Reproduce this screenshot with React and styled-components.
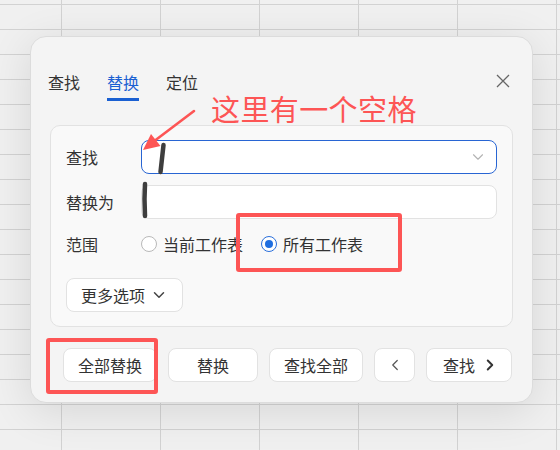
import React from "react";
import styled, { createGlobalStyle } from "styled-components";
import { ChevronDown, ChevronLeft, ChevronRight } from "lucide-react";

const GlobalStyle = createGlobalStyle`
  html, body { margin: 0; padding: 0; }
  html {
    background-color: #f0f0f0;
    background-image:
      linear-gradient(90deg, #d2d2d2 1px, transparent 1px),
      linear-gradient(180deg, #d2d2d2 1px, transparent 1px);
    background-size: 99px 25px;
    background-position: 61px 4px;
  }
  body {
    font-family: "Noto Sans CJK SC", "Noto Sans", sans-serif;
    color: #333;
  }
`;

const Page = styled.div`
  position: relative;
  width: 560px;
  height: 450px;
  box-sizing: border-box;
  padding: 36px 0 0 30px;
  overflow: hidden;
`;

const Dialog = styled.div`
  width: 503px;
  height: 367px;
  box-sizing: border-box;
  display: flex;
  flex-direction: column;
  background: #f4f4f4;
  border: 1px solid #dcdcdc;
  border-radius: 16px;
  box-shadow: 0 8px 44px rgba(0, 0, 0, 0.11);
  padding: 33px 19px 20px 19px;
`;

const Header = styled.div`
  display: flex;
  justify-content: space-between;
  align-items: flex-start;
  margin-left: -2px;
`;

const Tabs = styled.div`
  display: flex;
  gap: 27px;
`;

const Tab = styled.div`
  font-size: 16px;
  line-height: 24px;
  padding-bottom: 4px;
  color: ${(p) => (p.$active ? "#1a60d2" : "#333")};
  border-bottom: 3px solid ${(p) => (p.$active ? "#1a60d2" : "transparent")};
`;

const CloseButton = styled.div`
  width: 14px;
  height: 14px;
  margin: 4px 3px 0 0;
  display: flex;
`;

const Panel = styled.div`
  margin-top: 24px;
  height: 202px;
  box-sizing: border-box;
  background: #f9f9f9;
  border: 1px solid #e2e2e2;
  border-radius: 10px;
  padding: 14px 15px;
  display: flex;
  flex-direction: column;
`;

const FieldRow = styled.div`
  display: grid;
  grid-template-columns: 75px 1fr;
  align-items: center;
  height: ${(p) => p.$h || 34}px;
  margin-top: ${(p) => p.$mt || 0}px;
`;

const Label = styled.span`
  font-size: 16px;
  line-height: 24px;
  color: #333;
`;

const InputBox = styled.div`
  height: 34px;
  box-sizing: border-box;
  background: #fff;
  border: 1px solid ${(p) => (p.$focused ? "#2865d3" : "#e2e2e2")};
  border-radius: 8px;
  display: flex;
  align-items: center;
  justify-content: flex-end;
  padding-right: 9px;
  color: #b0b0b0;
`;

const RadioGroup = styled.div`
  display: flex;
  align-items: center;
  gap: 18px;
`;

const RadioOption = styled.label`
  display: flex;
  align-items: center;
  gap: 6px;
  font-size: 16px;
  line-height: 24px;
  color: #333;
`;

const RadioMark = styled.span`
  width: 16px;
  height: 16px;
  box-sizing: border-box;
  border-radius: 50%;
  background: #fff;
  border: 1px solid ${(p) => (p.$checked ? "#2a6fdb" : "#b9b9b9")};
  display: flex;
  align-items: center;
  justify-content: center;
  &::after {
    content: "";
    width: 8px;
    height: 8px;
    border-radius: 50%;
    background: ${(p) => (p.$checked ? "#1f6ee0" : "transparent")};
  }
`;

const Button = styled.div`
  height: 34px;
  box-sizing: border-box;
  min-width: ${(p) => (p.$square ? 41 : 90)}px;
  width: ${(p) => (p.$square ? "41px" : "auto")};
  padding: ${(p) => p.$pad || "0 14px"};
  display: flex;
  align-items: center;
  justify-content: center;
  gap: ${(p) => p.$gap || 0}px;
  background: #fff;
  border: 1px solid #e2e2e2;
  border-radius: 8px;
  font-size: 16px;
  line-height: 24px;
  color: #333;
  white-space: nowrap;
`;

const MoreButton = styled(Button)`
  align-self: flex-start;
  margin-top: 22px;
  width: 117px;
  padding: 0 14px;
  justify-content: space-between;
`;

const Footer = styled.div`
  margin-top: auto;
  display: flex;
  justify-content: flex-end;
  gap: 11px;
  margin-right: 1px;
`;

/* markup layer drawn on top of the dialog */
const Note = styled.div`
  position: absolute;
  left: 211px;
  top: 94px;
  font-size: 29px;
  line-height: 29px;
  color: #fd5555;
  white-space: nowrap;
  letter-spacing: 0.4px;
`;

const Frame = styled.div`
  position: absolute;
  left: ${(p) => p.$x}px;
  top: ${(p) => p.$y}px;
  width: ${(p) => p.$w}px;
  height: ${(p) => p.$h}px;
  box-sizing: border-box;
  border: 4px solid #fd5555;
  border-radius: 3px;
`;

const Overlay = styled.svg`
  position: absolute;
  left: 0;
  top: 0;
  pointer-events: none;
`;

export default function App() {
  return (
    <>
      <GlobalStyle />
      <Page>
        <Dialog>
          <Header>
            <Tabs>
              <Tab>查找</Tab>
              <Tab $active>替换</Tab>
              <Tab>定位</Tab>
            </Tabs>
            <CloseButton>
              <svg width="14" height="14" viewBox="0 0 14 14">
                <path d="M1 1 L13 13 M13 1 L1 13" stroke="#666" strokeWidth="1.3" fill="none" />
              </svg>
            </CloseButton>
          </Header>

          <Panel>
            <FieldRow>
              <Label>查找</Label>
              <InputBox $focused>
                <ChevronDown size={18} strokeWidth={1.5} color="#b3b3b3" />
              </InputBox>
            </FieldRow>
            <FieldRow $mt={11}>
              <Label>替换为</Label>
              <InputBox />
            </FieldRow>
            <FieldRow $h={24} $mt={13}>
              <Label>范围</Label>
              <RadioGroup>
                <RadioOption>
                  <RadioMark />
                  当前工作表
                </RadioOption>
                <RadioOption>
                  <RadioMark $checked />
                  所有工作表
                </RadioOption>
              </RadioGroup>
            </FieldRow>
            <MoreButton>
              更多选项
              <ChevronDown size={18} strokeWidth={2} color="#444" />
            </MoreButton>
          </Panel>

          <Footer>
            <Button>全部替换</Button>
            <Button>替换</Button>
            <Button>查找全部</Button>
            <Button $square $pad="0">
              <ChevronLeft size={18} strokeWidth={1.6} color="#555" />
            </Button>
            <Button $pad="0 12px 0 16px" $gap={6} style={{ minWidth: 0, width: 86 }}>
              查找
              <ChevronRight size={18} strokeWidth={2.6} color="#333" />
            </Button>
          </Footer>
        </Dialog>

        <Note>这里有一个空格</Note>
        <Frame $x={236} $y={213} $w={166} $h={59} />
        <Frame $x={46} $y={338} $w={112} $h={56} />

        <Overlay width="560" height="450" viewBox="0 0 560 450">
          {/* pointer to the leading space */}
          <line x1="194" y1="111" x2="153" y2="142" stroke="#fd5555" strokeWidth="2.6" strokeLinecap="round" />
          <polygon points="143,150 160.5,146 151,134" fill="#fd5555" />
          {/* pen strokes over the caret positions */}
          <path d="M163.5 145 L160.5 172" stroke="#3e3e3e" strokeWidth="4.5" strokeLinecap="round" fill="none" />
          <path d="M145 184 L144.5 199 L145 216" stroke="#3e3e3e" strokeWidth="4.5" strokeLinecap="round" fill="none" />
        </Overlay>
      </Page>
    </>
  );
}
